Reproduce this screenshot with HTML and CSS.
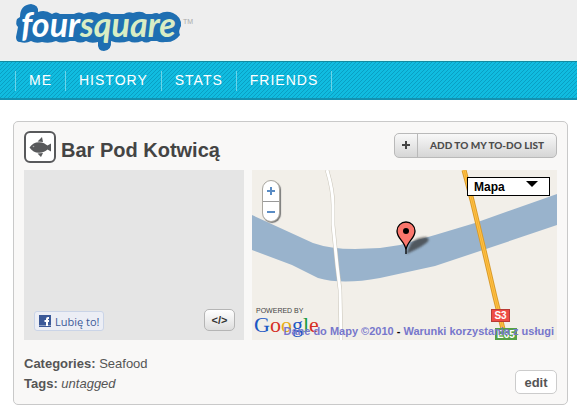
FILE: index.html
```html
<!DOCTYPE html>
<html lang="pl">

<head>
    <meta charset="UTF-8">
    <title>Bar Pod Kotwicą</title>
    <link rel="stylesheet" href="styles.css">
</head>

<body>
    <header class="header">
        <a class="logo" href="#">
            <svg width="183" height="54" viewBox="0 0 183 54">
                <path d="M16 37L18 27Q15 24 17 19L20 17Q20 5 31 4Q39 5 38 12Q45 9 52 14Q56 11 60 14H74Q79 11 84 14Q92 10 99 14Q106 10 111 14H124Q128 11 133 13Q141 10 146 14H152Q157 12 159 14Q166 10 173 13Q182 17 181 26Q178 31 180 35Q174 43 165 42Q160 43 157 41H151Q146 44 142 41Q134 44 129 41Q119 44 111 41Q112 50 104 51Q97 51 98 42Q91 44 86 41Q80 44 75 41H70Q62 44 56 41Q49 44 42 42Q36 44 31 41Q26 44 20 42Q16 42 16 37Z" fill="#1f6fb2"/>
                <text class="logo-text" x="21" y="37" fill="#fff">four<tspan fill="#d9edc4">square</tspan></text>
            </svg>
            <span class="tm">TM</span>
        </a>
    </header>

    <nav class="nav">
        <a href="#">ME</a>
        <a href="#">HISTORY</a>
        <a href="#">STATS</a>
        <a href="#">FRIENDS</a>
    </nav>

    <main class="venue">
        <div class="venue-header">
            <svg class="venue-icon" width="32" height="32" viewBox="0 0 32 32">
                <rect x="1" y="1" width="30" height="30" rx="5" fill="#fff" stroke="#58595b" stroke-width="2"/>
                <path d="M5.500 16.500C8 13 11 11.200 15 11.200C19 11.200 21.500 13 23.500 14.500L27 12.500V20.500L23.500 18.500C21.500 20 19 21.800 15 21.800C11 21.800 8 20 5.500 16.500Z" fill="#58595b"/>
                <path d="M13.500 10.500L18 6L19 11ZM13.500 22.500L17 26L19 22Z" fill="#58595b"/>
                <circle cx="9.500" cy="15.500" r="0.800" fill="#aaa"/>
            </svg>
            <h1>Bar Pod Kotwicą</h1>
            <button class="todo" type="button">
                <span class="todo-plus">
                    <svg width="10" height="10" viewBox="0 0 10 10"><path d="M5 1V9M1 5H9" stroke="#444" stroke-width="2"/></svg>
                </span>
                <span class="todo-label">ADD TO MY TO-DO LIST</span>
            </button>
        </div>

        <div class="media">
            <div class="share">
                <button class="like" type="button">
                    <svg width="12" height="12" viewBox="0 0 12 12">
                        <rect width="12" height="12" fill="#3b5998"/>
                        <rect y="10" width="12" height="1" fill="#8b9dc3"/>
                        <path d="M10 3H9Q8 3 8 4V11M5.500 6H10" fill="none" stroke="#fff" stroke-width="2"/>
                    </svg>
                    Lubię to!
                </button>
                <button class="embed" type="button" aria-label="Embed">&lt;/&gt;</button>
            </div>

            <div class="map">
                <svg class="map-canvas" viewBox="0 0 305 170" preserveAspectRatio="xMidYMid slice">
                    <defs>
                        <filter id="soft"><feGaussianBlur stdDeviation="1"/></filter>
                    </defs>
                    <rect width="305" height="170" fill="#f2efe9"/>
                    <path d="M0 45L61 73Q78 79 103 79L128 78L148 75L183 65L223 53L288 30L305 24V55L231 80L183 96L128 108Q90 115 66 108L40 95L0 80Z" fill="#99b3cc"/>
                    <path d="M75 0Q81 20 81 35V55L85 95L88 120L89 170" fill="none" stroke="#c9c4b8" stroke-width="4"/>
                    <path d="M75 0Q81 20 81 35V55L85 95L88 120L89 170" fill="none" stroke="#fff" stroke-width="3"/>
                    <path d="M212 0L220 30L232 80L243 127L252 163" fill="none" stroke="#d99a2b" stroke-width="5"/>
                    <path d="M212 0L220 30L232 80L243 127L252 163" fill="none" stroke="#ffc345" stroke-width="3"/>
                    <path d="M212 0L220 30L232 80L243 127L252 163" fill="none" stroke="#f3ad32" stroke-width="1"/>
                    <path d="M154 84L159 73Q165 67 174 67Q180 69 173 74Q166 79 154 84Z" fill="#333" opacity="0.700" filter="url(#soft)"/>
                    <path d="M154 84V80C153 71 145 69 145 61A9 9 0 0 1 163 61C163 69 155 71 154 80Z" fill="#fa766c" stroke="#000" stroke-width="1.300"/>
                    <circle cx="154" cy="61" r="3" fill="#000"/>
                    <rect x="239.500" y="139.500" width="18" height="12" fill="#ee4c45" stroke="#b93a35"/>
                    <text class="shield" x="248.500" y="149">S3</text>
                    <rect x="243" y="158" width="22" height="12" fill="#56a046"/>
                    <text class="shield" x="254" y="168">E65</text>
                    <text class="powered" x="4" y="143">POWERED BY</text>
                    <text class="google" x="2" y="162"><tspan fill="#1d58c4">G</tspan><tspan fill="#d62f25">o</tspan><tspan fill="#e8ad12">o</tspan><tspan fill="#1d58c4">g</tspan><tspan fill="#159a3c">l</tspan><tspan fill="#d62f25">e</tspan></text>
                </svg>
                <div class="zoom">
                    <button type="button" aria-label="Zoom in"><svg width="10" height="10" viewBox="0 0 10 10"><path d="M5 1V9M1 5H9" stroke="#5a8cc4" stroke-width="2"/></svg></button>
                    <button type="button" aria-label="Zoom out"><svg width="10" height="10" viewBox="0 0 10 10"><path d="M1 5H9" stroke="#5a8cc4" stroke-width="2"/></svg></button>
                </div>
                <div class="map-type">
                    <select aria-label="Map type">
                        <option>Mapa</option>
                    </select>
                    <svg width="12" height="6" viewBox="0 0 12 6"><path d="M0 0H12L6 6Z"/></svg>
                </div>
                <div class="terms"><a href="#">Dane do Mapy ©2010</a> - <a href="#">Warunki korzystania z usługi</a></div>
            </div>
        </div>

        <div class="details">
            <div>
                <p><strong>Categories:</strong> Seafood</p>
                <p><strong>Tags:</strong> <em>untagged</em></p>
            </div>
            <button class="edit" type="button">edit</button>
        </div>
    </main>
</body>

</html>
```

FILE: styles.css
```css
* {
    box-sizing: border-box;
}

body {
    font-family: "Liberation Sans", Arial, sans-serif;
    font-size: 13px;
    color: #555;
    background-color: #fff;
    margin: 0;
}

button,
select {
    font-family: inherit;
    padding: 0;
    cursor: pointer;
}

svg {
    display: block;
}

.header {
    height: 61px;
    background-color: #eee;
    border-bottom: 1px solid #dcfaf8;
}

.logo {
    display: flex;
    width: 200px;
    text-decoration: none;
}

.logo-text {
    font-family: Lato, sans-serif;
    font-size: 34px;
    font-style: italic;
    font-weight: bold;
}

.tm {
    font-size: 7px;
    color: #aaa;
    padding-top: 18px;
}

.nav {
    display: flex;
    height: 39px;
    padding: 9px 15px;
    background: linear-gradient(135deg, #10bce0 38%, #0a9fc3 38%, #0a9fc3 50%, #10bce0 50%, #10bce0 88%, #0a9fc3 88%) 0 0 / 4px 4px;
    border-top: 1px solid #128aa0;
    border-bottom: 2px solid #1391b0;
}

.nav a {
    height: 20px;
    line-height: 18px;
    padding: 0 13px;
    font-size: 14px;
    letter-spacing: 1px;
    color: #fff;
    text-decoration: none;
    border-left: 1px solid #6bd3e8;
}

.nav a:last-child {
    border-right: 1px solid #6bd3e8;
}

.venue {
    margin: 21px 9px 6px 13px;
    padding: 10px;
    background-color: #f9f8f7;
    border: 1px solid #c9c9c9;
    border-radius: 5px;
}

.venue-header {
    display: flex;
    align-items: center;
    height: 30px;
    margin-bottom: 8px;
}

.venue h1 {
    flex: 1;
    margin: 6px 0 0 5px;
    font-size: 20px;
    line-height: 24px;
    color: #444;
}

.todo {
    display: flex;
    height: 25px;
    margin-bottom: 4px;
    color: #4d4d4d;
    background: linear-gradient(#f8f8f8, #d6d6d6);
    border: 1px solid #b9b9b9;
    border-radius: 5px;
}

.todo-plus,
.todo-label {
    display: flex;
    align-items: center;
    height: 23px;
}

.todo-plus {
    padding: 0 6px;
    border-right: 1px solid #b9b9b9;
}

.todo-label {
    padding: 0 12px;
    font-family: Lato, sans-serif;
    font-size: 10px;
    font-weight: 900;
}

.media {
    display: flex;
    gap: 8px;
    height: 170px;
}

.share {
    display: flex;
    flex: 0 0 220px;
    align-items: flex-end;
    justify-content: space-between;
    padding: 8px 9px 9px 10px;
    background-color: #e5e5e5;
}

.like {
    display: flex;
    align-items: center;
    gap: 4px;
    height: 20px;
    padding: 0 4px;
    font-family: "Open Sans", sans-serif;
    font-size: 11px;
    color: #3b5998;
    background-color: #eceef5;
    border: 1px solid #cad4e7;
    border-radius: 3px;
}

.embed {
    width: 31px;
    height: 22px;
    font-size: 11px;
    font-weight: bold;
    color: #333;
    background: linear-gradient(#fff, #ddd);
    border: 1px solid #b5b5b5;
    border-radius: 5px;
}

.map {
    position: relative;
    flex: 1;
    overflow: hidden;
}

.map-canvas {
    width: 100%;
    height: 100%;
}

.shield {
    font-size: 10px;
    font-weight: bold;
    fill: #fff;
    text-anchor: middle;
}

.powered {
    font-size: 7px;
    fill: #444;
}

.google {
    font-family: "Liberation Serif", serif;
    font-size: 22px;
}

.zoom {
    position: absolute;
    top: 10px;
    left: 10px;
    width: 18px;
    background-color: #fff;
    border: 1px solid #aaa79f;
    border-radius: 9px;
    box-shadow: 1px 1px 1px #777;
}

.zoom button {
    display: flex;
    align-items: center;
    justify-content: center;
    width: 16px;
    height: 20px;
    background: none;
    border: none;
}

.zoom button + button {
    border-top: 1px solid #999;
}

.map-type {
    position: absolute;
    top: 7px;
    right: 7px;
    width: 83px;
}

.map-type select {
    display: block;
    appearance: none;
    width: 100%;
    height: 19px;
    padding: 0 6px;
    font-size: 12px;
    font-weight: bold;
    color: #000;
    background-color: #fff;
    border: 1px solid #000;
    border-radius: 0;
}

.map-type svg {
    position: absolute;
    top: 4px;
    right: 12px;
    pointer-events: none;
}

.terms {
    position: absolute;
    right: 3px;
    bottom: 2px;
    font-size: 11px;
    font-weight: bold;
    line-height: 14px;
    color: #000;
    white-space: nowrap;
}

.terms a {
    color: #77c;
    text-decoration: none;
}

.details {
    display: flex;
    align-items: flex-end;
    justify-content: space-between;
    padding-top: 14px;
}

.details p {
    margin: 0;
    line-height: 20px;
}

.edit {
    width: 42px;
    height: 24px;
    font-size: 13px;
    font-weight: bold;
    color: #555;
    background-color: #fff;
    border: 1px solid #ccc;
    border-radius: 5px;
}
```
